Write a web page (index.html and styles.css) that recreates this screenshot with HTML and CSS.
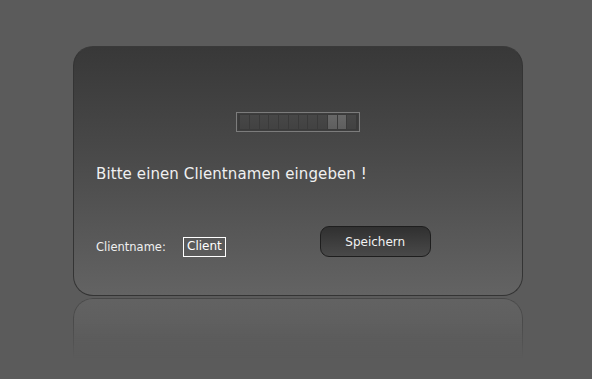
FILE: index.html
```html
<!DOCTYPE html>
<html lang="de">
<head>
  <meta charset="UTF-8" />
  <title>Client</title>
  <link rel="stylesheet" href="styles.css">
</head>
<body>

  <!-- Dialog -->
  <div class="dialog">
    <div class="progress">
      <span class="seg"></span><span class="seg"></span><span class="seg"></span>
      <span class="seg"></span><span class="seg"></span><span class="seg"></span>
      <span class="seg"></span><span class="seg"></span><span class="seg"></span>
      <span class="seg lit"></span><span class="seg lit"></span><span class="seg"></span>
    </div>

    <p class="message">Bitte einen Clientnamen eingeben !</p>

    <div class="form-row">
      <label class="label" for="client">Clientname:</label>
      <span class="field" id="client">Client</span>
      <button class="save-btn">Speichern</button>
    </div>
  </div>

  <!-- Reflection -->
  <div class="reflection"></div>

</body>
</html>
```

FILE: styles.css
```css
body {
  margin: 0;
  height: 379px;
  background-color: #5b5b5b;
  font-family: "DejaVu Sans", sans-serif;
  color: #f0f0f0;
  overflow: hidden;
  padding-top: 46px;
  box-sizing: border-box;
}

.dialog {
  width: 450px;
  height: 250px;
  margin-left: 73px;
  box-sizing: border-box;
  border-radius: 20px;
  border: 1px solid #343434;
  border-top-color: #3a3a3a;
  background: linear-gradient(to bottom, #383838 0%, #4a4a4a 45%, #636363 100%);
  display: flex;
  flex-direction: column;
  padding: 65px 22px 0 22px;
}

.progress {
  align-self: center;
  width: 124px;
  height: 20px;
  box-sizing: border-box;
  border: 1px solid #7c7c7c;
  box-shadow: inset 0 0 0 1px #3e3e3e;
  background-color: #3a3a3a;
  padding: 2px 3px;
  display: flex;
  gap: 1px;
}

.seg {
  flex: 1;
  background: linear-gradient(to bottom, #474747, #424242);
}

.seg.lit {
  background: linear-gradient(to bottom, #686868, #5e5e5e);
}

.message {
  margin: 33px 0 0 0;
  font-size: 15px;
  letter-spacing: 0.1px;
}

.form-row {
  display: flex;
  align-items: center;
  margin-top: 53px;
}

.label {
  font-size: 11.5px;
  width: 87px;
}

.field {
  font-size: 12px;
  border: 1px solid #ffffff;
  padding: 1px 3px 2px 3px;
  line-height: 15px;
  color: #ffffff;
}

.save-btn {
  margin-left: 94px;
  margin-top: -10px;
  width: 111px;
  height: 31px;
  border-radius: 9px;
  border: 1px solid #1e1e1e;
  background: linear-gradient(to bottom, #303030, #494949);
  color: #f2f2f2;
  font-family: "DejaVu Sans", sans-serif;
  font-size: 12px;
}

.reflection {
  width: 450px;
  height: 60px;
  margin: 2px 0 0 73px;
  box-sizing: border-box;
  border-radius: 20px 20px 0 0;
  border: 1px solid rgba(60, 60, 60, 0.6);
  border-bottom: none;
  background: linear-gradient(to bottom, #626262, #5b5b5b);
  -webkit-mask-image: linear-gradient(to bottom, #000 40%, transparent 100%);
}
```
